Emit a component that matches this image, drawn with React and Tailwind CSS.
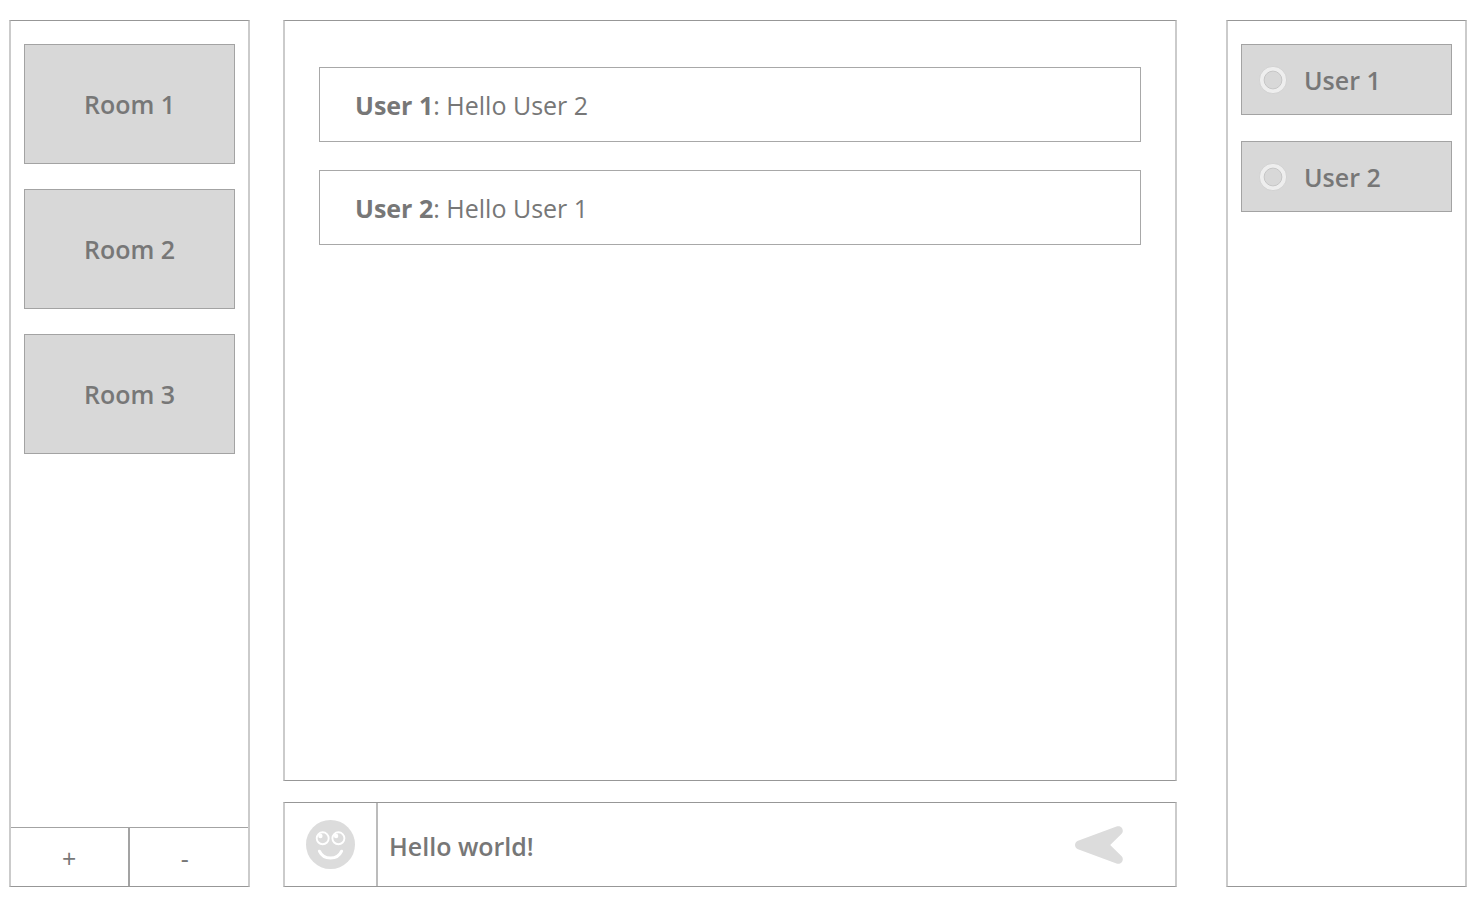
import { useState } from "react";

const rooms = ["Room 1", "Room 2", "Room 3"];
const users = ["User 1", "User 2"];
const messages = [
  { author: "User 1", text: "Hello User 2" },
  { author: "User 2", text: "Hello User 1" },
];

function StatusRing() {
  return (
    <svg className="size-7 shrink-0" viewBox="0 0 28 28" fill="none" aria-hidden="true">
      <circle cx="14" cy="14" r="11.2" stroke="#eeeeee" strokeWidth="4.8" />
      <circle cx="14" cy="14" r="13.6" stroke="#cbcbcb" strokeWidth="0.7" />
      <circle cx="14" cy="14" r="8.9" stroke="#c2c2c2" strokeWidth="0.9" />
    </svg>
  );
}

function Smiley() {
  return (
    <svg className="size-[49px]" viewBox="0 0 49 49" fill="none" aria-hidden="true">
      <circle cx="24.5" cy="24.5" r="24.5" fill="#dcdcdc" />
      <circle cx="16.7" cy="18.3" r="6" stroke="#fff" strokeWidth="1.9" />
      <circle cx="32.4" cy="18.3" r="6" stroke="#fff" strokeWidth="1.9" />
      <circle cx="14.4" cy="16" r="2.2" fill="#fff" />
      <circle cx="30.1" cy="16" r="2.2" fill="#fff" />
      <path d="M13.4 31.2C17.6 40.4 31.4 40.4 35.6 31.2" stroke="#fff" strokeWidth="3" strokeLinecap="round" />
    </svg>
  );
}

function SendArrow() {
  return (
    <svg className="h-[38px] w-12" viewBox="0 0 48 38" fill="#dcdcdc" aria-hidden="true">
      <path d="M3 14.8L41.5 0.5C46.6-1 49.8 4.6 46.4 8L35.2 19L46.4 30C49.8 33.4 46.6 39 41.5 37.5L3 23.2C-1 21.4-1 16.6 3 14.8Z" />
    </svg>
  );
}

export default function App() {
  const [draft, setDraft] = useState("Hello world!");

  return (
    <div className="flex min-h-screen bg-white pt-5 pr-[11px] pb-[21px] pl-[9px] font-['Open_Sans',sans-serif] text-[25px] text-[#777777]">
      <aside className="flex w-[241px] shrink-0 flex-col border-x-2 border-y border-x-[#cbcbcb] border-y-[#979797]">
        <nav aria-label="Rooms" className="flex flex-1 flex-col gap-[25px] px-[13px] pt-[23px]">
          {rooms.map((room) => (
            <button key={room} type="button" className="h-[120px] border border-[#a3a3a3] bg-[#d8d8d8] pt-0.5 font-semibold">
              {room}
            </button>
          ))}
        </nav>
        <div className="grid h-[59px] grid-cols-2 border-t border-[#a3a3a3]">
          <button type="button" aria-label="Add room" className="border-r-2 border-[#a3a3a3] pt-1">
            +
          </button>
          <button type="button" aria-label="Remove room" className="pt-1 pr-2">
            -
          </button>
        </div>
      </aside>

      <main className="ml-[33px] flex min-w-0 flex-1 flex-col gap-[21px]">
        <section
          aria-label="Messages"
          className="flex flex-1 flex-col gap-7 border-x-2 border-y border-x-[#cbcbcb] border-y-[#979797] px-[34px] pt-[46px]"
        >
          {messages.map((message) => (
            <p key={message.author} className="flex h-[75px] items-center border border-[#a8a8a8] px-[35px] pt-0.5">
              <span>
                <strong className="font-bold">{message.author}</strong>: {message.text}
              </span>
            </p>
          ))}
        </section>
        <form
          onSubmit={(event) => event.preventDefault()}
          className="flex h-[85px] border-x-2 border-y border-x-[#cbcbcb] border-y-[#979797]"
        >
          <button
            type="button"
            aria-label="Insert emoji"
            className="flex w-[93px] shrink-0 items-center justify-center border-r-2 border-[#bcbcbc]"
          >
            <Smiley />
          </button>
          <input
            aria-label="Message"
            value={draft}
            onChange={(event) => setDraft(event.target.value)}
            className="min-w-0 flex-1 bg-transparent pt-1 pl-[11px] font-semibold outline-none"
          />
          <button type="submit" aria-label="Send message" className="mr-[52px] shrink-0">
            <SendArrow />
          </button>
        </form>
      </main>

      <aside
        aria-label="Users"
        className="ml-[49px] flex w-[241px] shrink-0 flex-col gap-[26px] border-x-2 border-y border-x-[#cbcbcb] border-y-[#979797] px-[13px] pt-[23px]"
      >
        {users.map((user) => (
          <button
            key={user}
            type="button"
            className="flex h-[71px] items-center gap-[17px] border border-[#a3a3a3] bg-[#d8d8d8] px-[17px] font-semibold"
          >
            <StatusRing />
            <span className="pt-0.5">{user}</span>
          </button>
        ))}
      </aside>
    </div>
  );
}
